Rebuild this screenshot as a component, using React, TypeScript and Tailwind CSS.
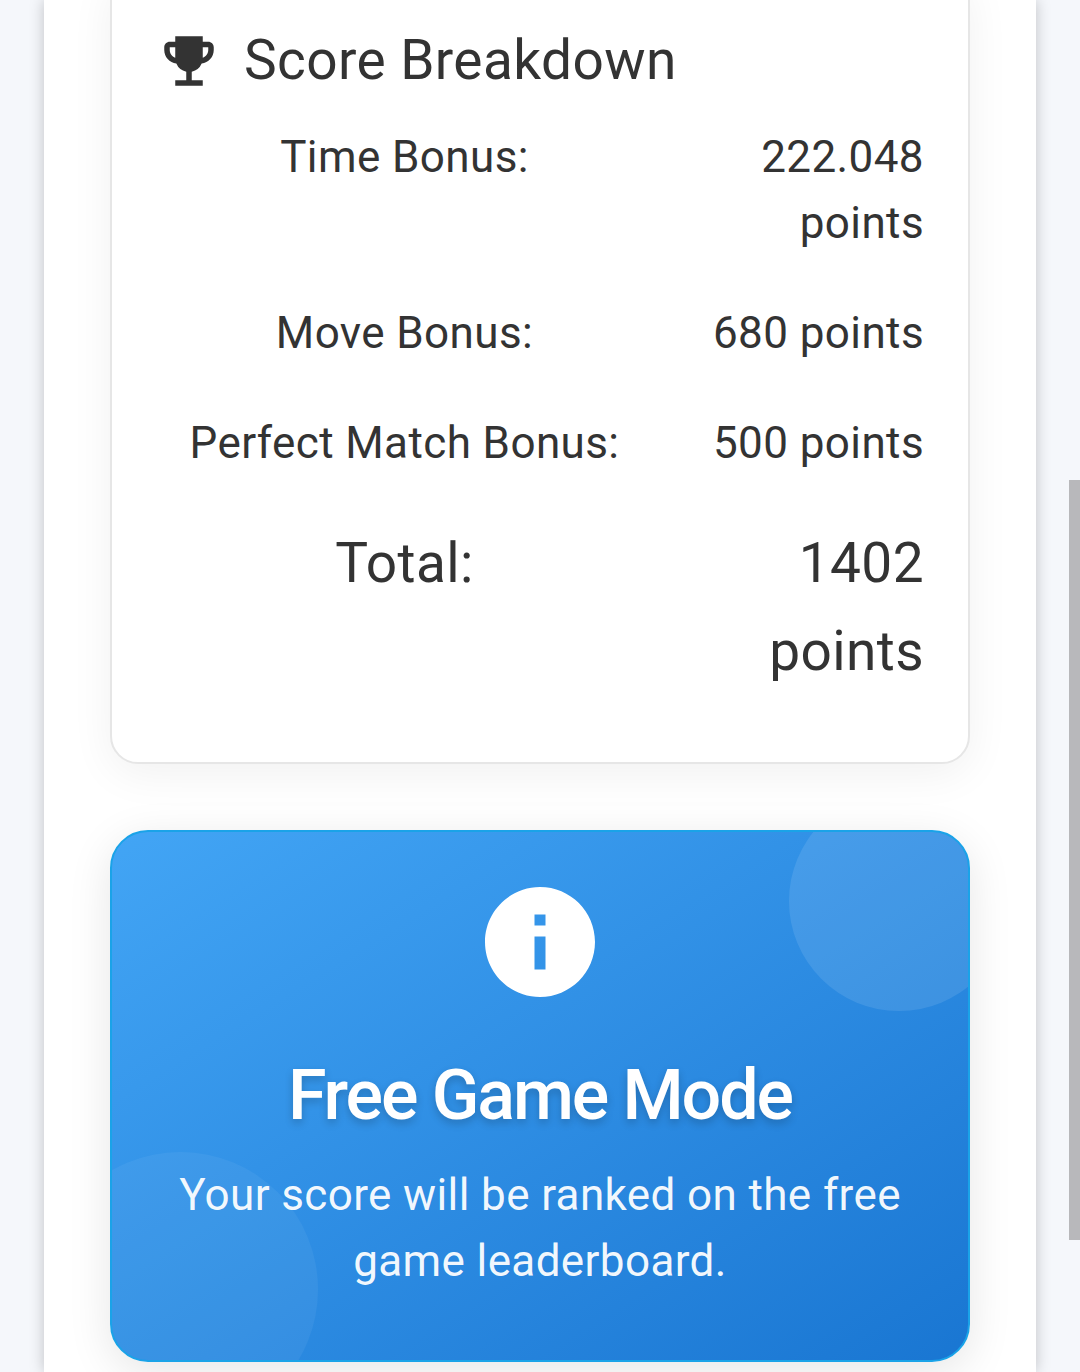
import { MdEmojiEvents, MdInfo } from "react-icons/md";

const ROWS = [
  { label: "Time Bonus:", value: "222.048 points" },
  { label: "Move Bonus:", value: "680 points" },
  { label: "Perfect Match Bonus:", value: "500 points" },
];

function ScoreRow({ label, value, total }: { label: string; value: string; total?: boolean }) {
  return (
    <div
      className={
        total
          ? "flex pt-[21px] pb-[22px] text-[55px] leading-[88px] tracking-[0.4px]"
          : "flex py-[22px] text-[44px] leading-[66px] tracking-[0.4px]"
      }
    >
      <div className="w-[475px] shrink-0 text-center">{label}</div>
      <div className="ml-[21px] w-[261px] text-right">{value}</div>
    </div>
  );
}

export default function App() {
  return (
    <div className="relative h-[1372px] overflow-hidden bg-[#f5f7fb] font-['Roboto',sans-serif] text-[#333333]">
      <div className="mx-[44px] flow-root h-full bg-white px-[66px] shadow-[0_0_14px_rgba(0,0,0,0.22)]">
        <section className="-mt-[30px] h-[794px] rounded-[28px] border-2 border-[#e6e6e6] bg-white pt-[55px] shadow-[0_10px_44px_rgba(0,0,0,0.06)]">
          <h2 className="flex items-center pl-[44px] text-[55px] leading-[66px] tracking-[0.4px]">
            <MdEmojiEvents size={66} className="mr-[22px] shrink-0 translate-y-px" />
            <span>Score Breakdown</span>
          </h2>
          <div className="mt-[9px] pl-[55px]">
            {ROWS.map((row) => (
              <ScoreRow key={row.label} label={row.label} value={row.value} />
            ))}
            <ScoreRow label="Total:" value="1402 points" total />
          </div>
        </section>

        <section className="relative mt-[66px] h-[532px] overflow-hidden rounded-[38px] border-2 border-[#1aa3e8] bg-linear-to-br from-[#42a5f5] to-[#1976d2] text-center text-white shadow-[0_10px_44px_rgba(0,0,0,0.1)]">
          <div className="absolute -right-[41px] -top-[41px] h-[220px] w-[220px] rounded-full bg-white/10" />
          <div className="absolute -bottom-[67px] -left-[69px] h-[275px] w-[275px] rounded-full bg-white/5" />
          <div className="relative flex flex-col items-center pt-[44px]">
            <MdInfo size={132} />
            <h3 className="mt-[32px] text-[70px] font-medium leading-[110px] tracking-[-2.1px] [text-shadow:0_4px_8px_rgba(0,0,0,0.2)]">
              Free Game Mode
            </h3>
            <p className="mt-[12px] w-[780px] text-[44px] leading-[66px] tracking-[0.38px] text-white/95">
              Your score will be ranked on the free game leaderboard.
            </p>
          </div>
        </section>
      </div>
      <div className="absolute right-0 top-[480px] h-[760px] w-[11px] bg-[#b8b8bb]" />
    </div>
  );
}
